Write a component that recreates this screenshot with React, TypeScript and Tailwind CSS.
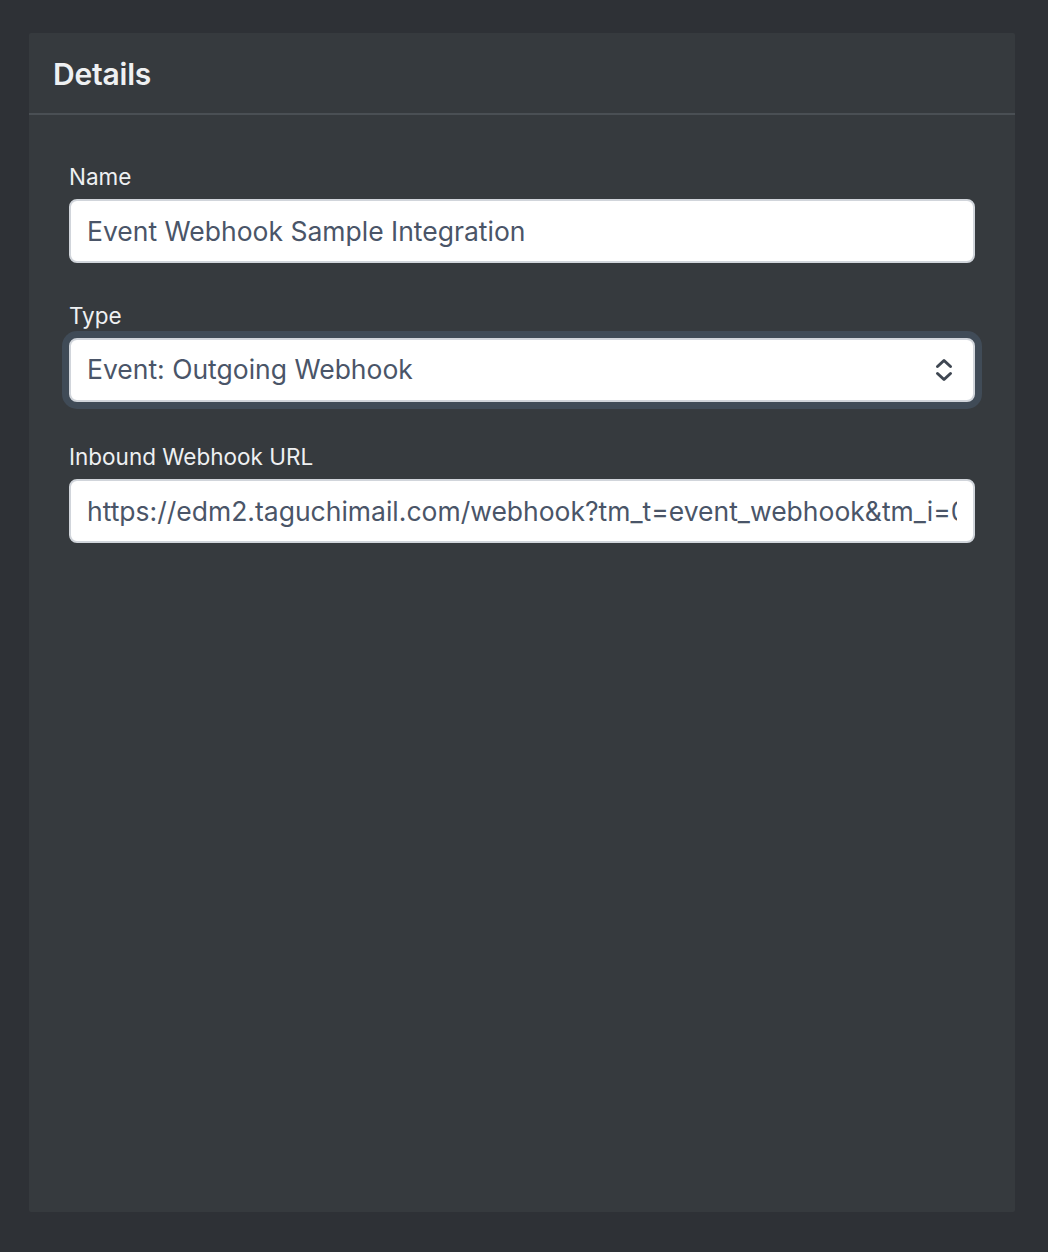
export default function App() {
  return (
    <div
      className="min-h-screen bg-[#2e3136] pt-[33px] pl-[29px] pr-[33px] pb-[40px]"
      style={{ fontFamily: "Inter, 'Noto Sans', sans-serif" }}
    >
      <div className="h-[1179px] rounded-[2px] bg-[#363a3e]">
        {/* Header */}
        <div className="h-[82px] border-b-2 border-[#4a4f54] pl-6 pt-[3px] flex items-center">
          <h1 className="text-[30px] font-semibold text-[#eef0f2] tracking-[-0.2px]">Details</h1>
        </div>

        {/* Form */}
        <div className="px-10 pt-12 flex flex-col gap-10">
          <div>
            <label className="block text-[22.5px] leading-[28px] mb-2 text-[#eef0f2]">Name</label>
            <input
              readOnly
              value="Event Webhook Sample Integration"
              className="w-full h-16 rounded-lg border-2 border-[#d1d5db] bg-white px-4 text-[26.5px] text-[#4a5568] outline-none"
            />
          </div>

          <div>
            <label className="block text-[22.5px] leading-[28px] mb-2 text-[#eef0f2] -mt-px">Type</label>
            <div className="relative h-16 rounded-lg border-2 border-[#d1d5db] bg-white shadow-[0_0_0_7px_#404b57]">
              <div className="h-full flex items-center px-4 text-[26.5px] text-[#4a5568]">Event: Outgoing Webhook</div>
              <svg
                className="absolute right-[20px] top-1/2 -translate-y-1/2"
                width="18"
                height="26"
                viewBox="0 0 18 26"
                fill="none"
                stroke="#3f4752"
                strokeWidth="3"
                strokeLinecap="round"
                strokeLinejoin="round"
              >
                <path d="M2.5 9.5 9 3.5l6.5 6" />
                <path d="M2.5 16.5 9 22.5l6.5-6" />
              </svg>
            </div>
          </div>

          <div>
            <label className="block text-[22.5px] leading-[28px] mb-2 text-[#eef0f2] mt-px">Inbound Webhook URL</label>
            <input
              readOnly
              value="https://edm2.taguchimail.com/webhook?tm_t=event_webhook&tm_i=0123456789"
              className="w-full h-16 rounded-lg border-2 border-[#d1d5db] bg-white px-4 text-[26.5px] text-[#4a5568] outline-none"
            />
          </div>
        </div>
      </div>
    </div>
  );
}
